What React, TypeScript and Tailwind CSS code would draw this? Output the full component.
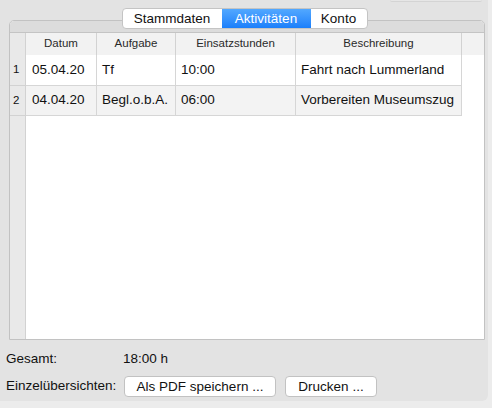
import React from "react";

const font = { fontFamily: '"Liberation Sans", Arial, sans-serif' };

const rows = [
  { n: "1", d: "05.04.20", a: "Tf", e: "10:00", b: "Fahrt nach Lummerland", bg: "bg-white" },
  { n: "2", d: "04.04.20", a: "Begl.o.b.A.", e: "06:00", b: "Vorbereiten Museumszug", bg: "bg-[#f3f3f3]" },
];

export default function App() {
  return (
    <div className="w-[492px] h-[408px] bg-[#ececec] relative overflow-hidden text-[#111]" style={font}>
      <div className="absolute top-0 left-[390px] w-[92px] h-[2px] border-b border-[#d4d4d4] rounded-b-[3px] bg-[#e6e6e6]" />
      <div className="w-[488px] h-[401px] bg-[#e3e3e3] rounded-br-[6px] flex flex-col">
        {/* Tabs */}
        <div className="h-[8px]" />
        <div className="relative z-10 flex justify-center h-[21px] pl-[1px]">
          <div className="flex h-[21px] rounded-[4px] border border-[#c4c4c4] bg-white overflow-hidden text-[13.5px] leading-none">
            <div className="w-[99px] flex items-center justify-center">Stammdaten</div>
            <div className="w-[89px] flex items-center justify-center text-white bg-gradient-to-b from-[#52a8ff] to-[#1a7ffb]">Aktivitäten</div>
            <div className="w-[56px] flex items-center justify-center">Konto</div>
          </div>
        </div>
        {/* Tab box */}
        <div className="-mt-[9px] ml-[9px] w-[476px] h-[320px] border border-[#c2c2c2] rounded-t-[5px] bg-white flex flex-col overflow-hidden">
          <div className="h-[12px] bg-[#dcdcdc] border-b border-[#c4c4c4] shrink-0" />
          <div className="flex-1 relative flex flex-col">
            {/* header */}
            <div className="grid grid-cols-[16px_71px_79px_120px_166px_1fr] h-[22px] bg-[#f2f2f2] text-[11.5px] text-[#2a2a2a] shrink-0">
              <div className="bg-[#e9e9e9] border-r border-[#d2d2d2]" />
              <div className="border-r border-[#d2d2d2] flex items-center justify-center">Datum</div>
              <div className="border-r border-[#d2d2d2] flex items-center justify-center">Aufgabe</div>
              <div className="border-r border-[#d2d2d2] flex items-center justify-center">Einsatzstunden</div>
              <div className="border-r border-[#d2d2d2] flex items-center justify-center">Beschreibung</div>
              <div />
            </div>
            {rows.map((r, i) => (
              <div
                key={r.n}
                className={`grid grid-cols-[16px_71px_79px_120px_166px_1fr] ${i === 0 ? "h-[31px]" : "h-[30px]"} text-[13.5px] shrink-0`}
              >
                <div className="bg-[#e9e9e9] border-r border-b border-[#d2d2d2] flex items-center pl-[3px] text-[11.5px]">{r.n}</div>
                <div className={`${r.bg} border-r border-b border-[#d6d6d6] flex items-center pl-[6px]`}>{r.d}</div>
                <div className={`${r.bg} border-r border-b border-[#d6d6d6] flex items-center pl-[5px]`}>{r.a}</div>
                <div className={`${r.bg} border-r border-b border-[#d6d6d6] flex items-center pl-[5px]`}>{r.e}</div>
                <div className={`${r.bg} border-r border-b border-[#d6d6d6] flex items-center pl-[5px]`}>{r.b}</div>
                <div className="bg-white" />
              </div>
            ))}
            <div className="flex-1 flex">
              <div className="w-[16px] bg-[#e9e9e9] border-r border-[#d2d2d2]" />
              <div className="flex-1 bg-white" />
            </div>
          </div>
        </div>
        {/* Footer */}
        <div className="flex items-center h-[17px] mt-[11px] text-[13.5px]">
          <div className="w-[123px] pl-[6px]">Gesamt:</div>
          <div>18:00 h</div>
        </div>
        <div className="flex items-center h-[21px] mt-[8px] text-[13.5px]">
          <div className="w-[124px] pl-[6px]">Einzelübersichten:</div>
          <button className="w-[152px] h-[21px] bg-white border border-[#c2c2c2] rounded-[4px] text-[13.5px] leading-none flex items-center justify-center">
            Als PDF speichern ...
          </button>
          <button className="ml-[9px] w-[92px] h-[21px] bg-white border border-[#c2c2c2] rounded-[4px] text-[13.5px] leading-none flex items-center justify-center">
            Drucken ...
          </button>
        </div>
      </div>
    </div>
  );
}
